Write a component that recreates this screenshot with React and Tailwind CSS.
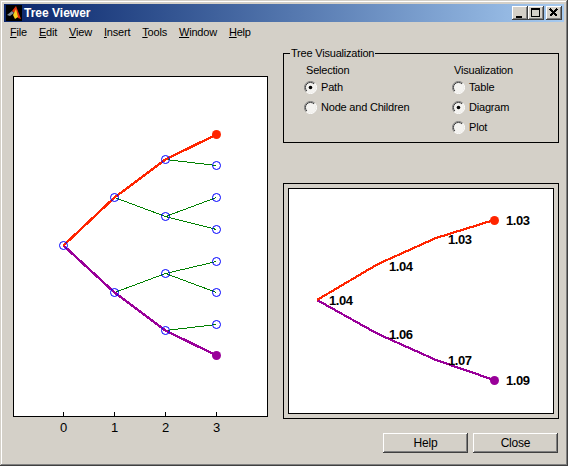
import React from 'react';

const sans = { fontFamily: '"Liberation Sans", Arial, sans-serif' };

const raised = 'shadow-[inset_-1px_-1px_#404040,inset_1px_1px_#ffffff,inset_-2px_-2px_#808080]';

const menus = ['File', 'Edit', 'View', 'Insert', 'Tools', 'Window', 'Help'];

const ticks = [63, 114, 165, 216];
const greens = [
  [114, 197, 165, 216], [165, 159, 216, 165], [165, 216, 216, 197], [165, 216, 216, 229],
  [114, 292, 165, 273], [165, 273, 216, 261], [165, 273, 216, 292], [165, 330, 216, 324],
];
const nodes = [
  [63, 245], [114, 197], [114, 292], [165, 159], [165, 216], [165, 273], [165, 330],
  [216, 165], [216, 197], [216, 229], [216, 261], [216, 292], [216, 324],
];
const labels = [
  ['1.04', 329, 305], ['1.04', 389, 271], ['1.03', 448, 244], ['1.03', 506, 225],
  ['1.06', 389, 339], ['1.07', 448, 365], ['1.09', 506, 385],
];

function MatlabIcon() {
  return (
    <svg width="16" height="16" viewBox="0 0 16 16" className="shrink-0">
      <rect width="16" height="16" fill="#000000" />
      <path d="M1 10 L6 6 L8 8 L4 11 Z" fill="#7f8c9c" />
      <path d="M6 6 L10 1 L15 14 L12 13 L9 8 Z" fill="#e03010" />
      <path d="M8 8 L10 4 L12 12 L9 14 L7 10 Z" fill="#f8d020" />
    </svg>
  );
}

function TitleButton({ className, children }) {
  return (
    <div className={`w-[16px] h-[14px] bg-[#d4d0c8] flex items-center justify-center ${raised} ${className || ''}`}>
      <svg width="16" height="14" viewBox="0 0 16 14" shapeRendering="crispEdges">{children}</svg>
    </div>
  );
}

function Radio({ checked, label }) {
  return (
    <label className="flex items-center h-[20px] -ml-[2px]">
      <svg width="13" height="13" viewBox="0 0 13 13" className="shrink-0 mr-[4px]">
        <circle cx="6.5" cy="6.5" r="5.5" fill="#f4f3f0" />
        <path d="M2.2 10.8 A6 6 0 0 1 10.8 2.2" fill="none" stroke="#808080" strokeWidth="1" />
        <path d="M2.9 10 A5 5 0 0 1 10 2.9" fill="none" stroke="#404040" strokeWidth="1" />
        <path d="M10.8 2.2 A6 6 0 0 1 2.2 10.8" fill="none" stroke="#ffffff" strokeWidth="1" />
        {checked && <circle cx="6.5" cy="6.5" r="1.8" fill="#000000" />}
      </svg>
      <span>{label}</span>
    </label>
  );
}

function PushButton({ children }) {
  return (
    <button className={`w-[85px] h-[20px] bg-[#d4d0c8] text-[12px] tracking-[-0.2px] text-black ${raised}`}>{children}</button>
  );
}

function TreeAxes() {
  return (
    <svg width="255" height="366" viewBox="13 76 255 366" className="block">
      <rect x="13.5" y="76.5" width="254" height="340" fill="#ffffff" stroke="#000000" />
      {ticks.map((x) => (
        <line key={x} x1={x + 0.5} y1="412" x2={x + 0.5} y2="416" stroke="#000000" shapeRendering="crispEdges" />
      ))}
      {ticks.map((x, i) => (
        <text key={x} x={x + 0.5} y="432" textAnchor="middle" fontSize="13" fill="#000000" style={sans}>{i}</text>
      ))}
      <g transform="translate(0.5 0.5)">
        <g shapeRendering="crispEdges">
          {greens.map(([x1, y1, x2, y2], i) => (
            <line key={i} x1={x1} y1={y1} x2={x2} y2={y2} stroke="#008000" strokeWidth="1" />
          ))}
          <polyline points="63,245 114,292 165,330 216,355" fill="none" stroke="#990099" strokeWidth="2.4" />
          <polyline points="63,245 114,197 165,159 216,134" fill="none" stroke="#ff2500" strokeWidth="2.4" />
        </g>
        {nodes.map(([x, y], i) => (
          <circle key={i} cx={x} cy={y} r="4" fill="none" stroke="#0000ff" strokeWidth="1" />
        ))}
        <circle cx="216" cy="134" r="4.5" fill="#ff2500" />
        <circle cx="216" cy="355" r="4.5" fill="#990099" />
      </g>
    </svg>
  );
}

function PathDiagram() {
  return (
    <svg width="264" height="224" viewBox="289 189 264 224" className="block bg-white">
      <g shapeRendering="crispEdges">
        <polyline points="317,300 378,334 436,360 494,380" fill="none" stroke="#990099" strokeWidth="2.2" />
        <polyline points="317,300 378,264 436,238 494,220" fill="none" stroke="#ff2500" strokeWidth="2.2" />
      </g>
      <circle cx="494.5" cy="220.5" r="4.5" fill="#ff2500" />
      <circle cx="494.5" cy="380.5" r="4.5" fill="#990099" />
      {labels.map(([t, x, y], i) => (
        <text key={i} x={x} y={y} fontSize="13" fontWeight="700" letterSpacing="-0.4" fill="#000000" style={sans}>{t}</text>
      ))}
    </svg>
  );
}

export default function App() {
  return (
    <div
      className="w-[568px] h-[466px] bg-[#d4d0c8] p-[4px] flex flex-col text-[11px] tracking-[-0.2px] text-black overflow-hidden shadow-[inset_-1px_-1px_#404040,inset_1px_1px_#d4d0c8,inset_-2px_-2px_#808080,inset_2px_2px_#ffffff]"
      style={sans}
    >
      <div className="h-[18px] shrink-0 flex items-center pl-[2px] pr-[2px] bg-gradient-to-r from-[#0a246a] to-[#a6caf0]">
        <MatlabIcon />
        <span className="ml-[2px] text-[12px] font-bold text-white tracking-normal">Tree Viewer</span>
        <div className="ml-auto flex">
          <TitleButton>
            <rect x="4" y="10" width="6" height="2" fill="#000000" />
          </TitleButton>
          <TitleButton className="mr-[2px]">
            <path d="M3 2h9v9h-9z M4 4v6h7v-6z" fill="#000000" fillRule="evenodd" />
          </TitleButton>
          <TitleButton>
            <path d="M4 3 L11 10 M11 3 L4 10" stroke="#000000" strokeWidth="1.6" fill="none" />
          </TitleButton>
        </div>
      </div>

      <div className="h-[20px] shrink-0 flex items-center gap-[12px] pl-[6px]">
        {menus.map((m) => (
          <span key={m}><span className="underline">{m[0]}</span>{m.slice(1)}</span>
        ))}
      </div>

      <div className="flex items-start pl-[9px]">
        <div className="pt-[34px] shrink-0">
          <TreeAxes />
        </div>
        <div className="ml-[15px] w-[276px] pt-[5px] flex flex-col">
          <fieldset className="h-[96px] border border-black pl-[22px] pr-[16px]">
            <legend className="-ml-[16px] px-[1px] leading-[13px]">Tree Visualization</legend>
            <div className="flex pt-[3px]">
              <div className="w-[148px]">
                <div className="h-[14px] leading-[14px]">Selection</div>
                <Radio checked label="Path" />
                <Radio label="Node and Children" />
              </div>
              <div>
                <div className="h-[14px] leading-[14px]">Visualization</div>
                <Radio label="Table" />
                <Radio checked label="Diagram" />
                <Radio label="Plot" />
              </div>
            </div>
          </fieldset>
          <div className="mt-[40px] border border-black p-[4px]">
            <div className="border border-black">
              <PathDiagram />
            </div>
          </div>
          <div className="mt-[14px] pr-[1px] flex justify-end gap-[5px]">
            <PushButton>Help</PushButton>
            <PushButton>Close</PushButton>
          </div>
        </div>
      </div>
    </div>
  );
}
